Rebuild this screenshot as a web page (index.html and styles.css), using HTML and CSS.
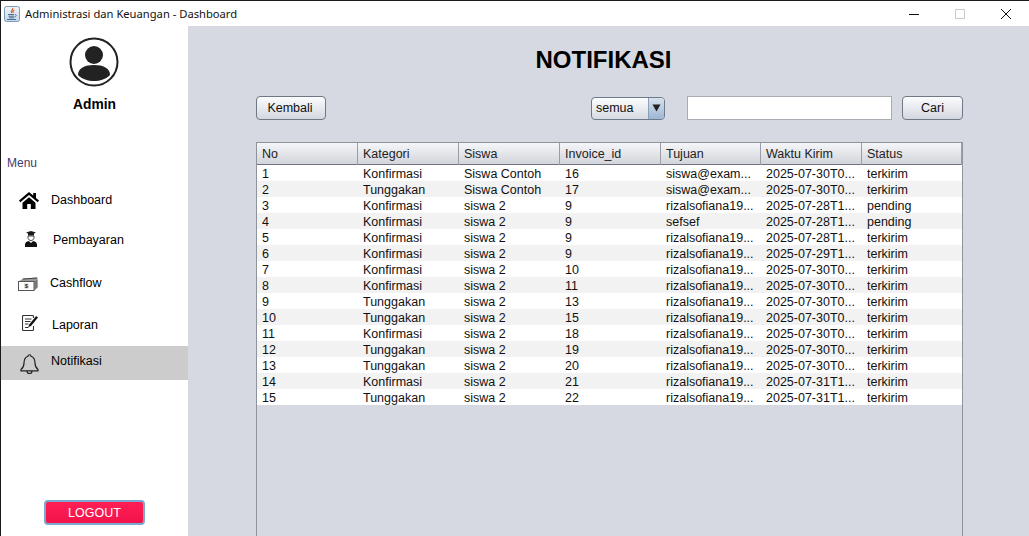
FILE: index.html
```html
<!DOCTYPE html>
<html lang="id">
<head>
<meta charset="utf-8">
<title>Administrasi dan Keuangan - Dashboard</title>
<link rel="stylesheet" href="styles.css">
</head>
<body>
<div class="window">
  <header class="titlebar">
    <svg class="app-icon" viewBox="0 0 16 16" width="16" height="16">
      <defs><linearGradient id="jv" x1="0" y1="0" x2="0" y2="1"><stop offset="0" stop-color="#f2f6fa"/><stop offset="1" stop-color="#c4d5e6"/></linearGradient></defs>
      <rect x="0.500" y="0.500" width="15" height="15" rx="2" fill="url(#jv)" stroke="#7f9db9"/>
      <path d="M8.500 2c1.500 1.700-2.200 2.700-1 5M10.500 4c-2 1-2 2-1.200 3" fill="none" stroke="#d9622b" stroke-width="1.200"/>
      <path d="M4 8.500h6M4.500 10.200h5.500M5 11.800h5M3 13.500h9M11 8.500c2 0 1.500 2-.5 2.500" fill="none" stroke="#4a6f96" stroke-width="1"/>
    </svg>
    <span class="title-text">Administrasi dan Keuangan - Dashboard</span>
    <div class="win-controls">
      <svg class="win-btn" viewBox="0 0 46 26" width="46" height="26"><path d="M18 13.500h10" stroke="#111" fill="none"/></svg>
      <svg class="win-btn" viewBox="0 0 46 26" width="46" height="26"><rect x="18.500" y="8.500" width="9" height="9" stroke="#ccc" fill="none"/></svg>
      <svg class="win-btn" viewBox="0 0 46 26" width="46" height="26"><path d="M18 8l10 10M28 8l-10 10" stroke="#111" fill="none"/></svg>
    </div>
  </header>
  <div class="content">
    <aside class="sidebar">
      <div class="profile">
        <svg class="avatar" viewBox="0 0 50 50" width="50" height="50">
          <circle cx="25" cy="25" r="23.500" fill="#fff" stroke="#222" stroke-width="2"/>
          <circle cx="25" cy="18" r="9" fill="#222"/>
          <path d="M9 38c0-7 7-10 16-10s16 3 16 10c-4 4-10 6-16 6s-12-2-16-6z" fill="#222"/>
        </svg>
        <div class="admin-name">Admin</div>
      </div>
      <div class="menu-label">Menu</div>
      <nav class="nav">
        <div class="nav-item item-dashboard">
          <svg class="nav-icon" viewBox="0 0 20 17" width="20" height="17"><path d="M10 0L0 8.500l1.300 1.700L10 3l8.700 7.200L20 8.500l-3-2.600V1h-2.800v2.500zM3.500 10.700V17h4.700v-5h3.600v5h4.700v-6.300L10 5.200z" fill="#000"/></svg>
          <span>Dashboard</span>
        </div>
        <div class="nav-item item-bayar">
          <svg class="nav-icon" viewBox="0 0 12 16" width="12" height="16"><path d="M1 1.500L6 0l5 1.500-2 1V4.500H3V2.500z" fill="#1a1a1a"/><path d="M3 5h6v1.500C9 8.500 7.500 9.500 6 9.500S3 8.500 3 6.500z" fill="#fff" stroke="#333" stroke-width="0.900"/><path d="M0 16v-2.500C0 11.500 2 10.300 3.800 10L6 12l2.200-2c1.800.3 3.800 1.500 3.800 3.500V16z" fill="#111"/></svg>
          <span>Pembayaran</span>
        </div>
        <div class="nav-item item-cash">
          <svg class="nav-icon" viewBox="0 0 20 14" width="20" height="14"><path d="M0.500 4.500L5 1.500 19.500 0.500V9.500L16 13.500z" fill="#999"/><path d="M5 2l14-1" stroke="#444" fill="none"/><rect x="0.500" y="4.500" width="15.500" height="9" fill="#fff" stroke="#555"/><path d="M16.500 4.500l3-2v8l-3 3z" fill="#777"/><rect x="6" y="6.500" width="5" height="5" fill="#ddd"/><text x="8.500" y="11" class="dollar">$</text></svg>
          <span>Cashflow</span>
        </div>
        <div class="nav-item item-laporan">
          <svg class="nav-icon" viewBox="0 0 16 16" width="16" height="16"><path d="M11.500 11v3.500c0 .5-.4 1-1 1H1.500c-.6 0-1-.5-1-1V1.500c0-.6.4-1 1-1h9c.6 0 1 .4 1 1V3" fill="#fff" stroke="#333" stroke-width="1.100"/><path d="M3 4h6.500M3 6.500h5.500M3 9h3.500M3 12.500h3.500" stroke="#333" stroke-width="1"/><path d="M14.200 1L16 2.600 9 11l-2.700 1.300L7.200 9.500z" fill="#111"/></svg>
          <span>Laporan</span>
        </div>
        <div class="nav-item item-notif">
          <svg class="nav-icon" viewBox="0 0 19 21" width="19" height="21"><path d="M8 3.300C8 1.200 11 1.200 11 3.300 14 4.300 15 7 15 10c0 3.500 1 5 3 6.500v1.300H1v-1.300C3 15 4 13.500 4 10 4 7 5 4.300 8 3.300zM7 18c0 3.500 5 3.500 5 0" fill="none" stroke="#222" stroke-width="1.200"/></svg>
          <span class="notif-label">Notifikasi</span>
        </div>
      </nav>
      <div class="logout-wrap"><button class="logout">LOGOUT</button></div>
    </aside>
    <main class="main">
      <h1 class="page-title">NOTIFIKASI</h1>
      <div class="toolbar">
        <button class="btn btn-back">Kembali</button>
        <div class="combo">
          <span class="combo-value">semua</span>
          <span class="combo-arrow"><svg viewBox="0 0 9 8" width="9" height="8"><path d="M0.500 0.500h8l-4 7z" fill="#222"/></svg></span>
        </div>
        <input class="search" type="text" aria-label="Cari">
        <button class="btn btn-search">Cari</button>
      </div>
      <div class="table-wrap">
        <div class="thead">
          <div class="th">No</div><div class="th">Kategori</div><div class="th">Siswa</div><div class="th">Invoice_id</div><div class="th">Tujuan</div><div class="th">Waktu Kirim</div><div class="th">Status</div>
        </div>
        <div class="tr"><div>1</div><div>Konfirmasi</div><div>Siswa Contoh</div><div>16</div><div>siswa@exam...</div><div>2025-07-30T0...</div><div>terkirim</div></div>
        <div class="tr"><div>2</div><div>Tunggakan</div><div>Siswa Contoh</div><div>17</div><div>siswa@exam...</div><div>2025-07-30T0...</div><div>terkirim</div></div>
        <div class="tr"><div>3</div><div>Konfirmasi</div><div>siswa 2</div><div>9</div><div>rizalsofiana19...</div><div>2025-07-28T1...</div><div>pending</div></div>
        <div class="tr"><div>4</div><div>Konfirmasi</div><div>siswa 2</div><div>9</div><div>sefsef</div><div>2025-07-28T1...</div><div>pending</div></div>
        <div class="tr"><div>5</div><div>Konfirmasi</div><div>siswa 2</div><div>9</div><div>rizalsofiana19...</div><div>2025-07-28T1...</div><div>terkirim</div></div>
        <div class="tr"><div>6</div><div>Konfirmasi</div><div>siswa 2</div><div>9</div><div>rizalsofiana19...</div><div>2025-07-29T1...</div><div>terkirim</div></div>
        <div class="tr"><div>7</div><div>Konfirmasi</div><div>siswa 2</div><div>10</div><div>rizalsofiana19...</div><div>2025-07-30T0...</div><div>terkirim</div></div>
        <div class="tr"><div>8</div><div>Konfirmasi</div><div>siswa 2</div><div>11</div><div>rizalsofiana19...</div><div>2025-07-30T0...</div><div>terkirim</div></div>
        <div class="tr"><div>9</div><div>Tunggakan</div><div>siswa 2</div><div>13</div><div>rizalsofiana19...</div><div>2025-07-30T0...</div><div>terkirim</div></div>
        <div class="tr"><div>10</div><div>Tunggakan</div><div>siswa 2</div><div>15</div><div>rizalsofiana19...</div><div>2025-07-30T0...</div><div>terkirim</div></div>
        <div class="tr"><div>11</div><div>Konfirmasi</div><div>siswa 2</div><div>18</div><div>rizalsofiana19...</div><div>2025-07-30T0...</div><div>terkirim</div></div>
        <div class="tr"><div>12</div><div>Tunggakan</div><div>siswa 2</div><div>19</div><div>rizalsofiana19...</div><div>2025-07-30T0...</div><div>terkirim</div></div>
        <div class="tr"><div>13</div><div>Tunggakan</div><div>siswa 2</div><div>20</div><div>rizalsofiana19...</div><div>2025-07-30T0...</div><div>terkirim</div></div>
        <div class="tr"><div>14</div><div>Konfirmasi</div><div>siswa 2</div><div>21</div><div>rizalsofiana19...</div><div>2025-07-31T1...</div><div>terkirim</div></div>
        <div class="tr"><div>15</div><div>Tunggakan</div><div>siswa 2</div><div>22</div><div>rizalsofiana19...</div><div>2025-07-31T1...</div><div>terkirim</div></div>
      </div>
    </main>
  </div>
</div>
</body>
</html>
```
FILE: styles.css
```css
* { box-sizing: border-box; }
html, body { margin: 0; height: 100%; overflow: hidden; }
body { font-family: "Liberation Sans", Arial, sans-serif; color: #111; background: #fff; }
.window { width: 1029px; height: 536px; display: flex; flex-direction: column; overflow: hidden; border-top: 1px solid #1a1a1a; border-left: 1px solid #1a1a1a; }
.titlebar { height: 25px; flex: none; display: flex; align-items: center; background: #fff; padding-left: 3px; }
.app-icon { flex: none; margin-right: 5px; }
.title-text { font-family: "Noto Sans", "Open Sans", sans-serif; font-size: 11.2px; color: #111; }
.win-controls { margin-left: auto; display: flex; margin-right: 0; }
.win-btn { display: block; }
.content { flex: 1; display: flex; min-height: 0; }
.sidebar { width: 187px; flex: none; background: #fff; display: flex; flex-direction: column; }
.profile { display: flex; flex-direction: column; align-items: center; padding-top: 11px; }
.avatar { display: block; margin-left: -1px; }
.admin-name { font-weight: bold; font-size: 13.8px; color: #000; margin: 10px 0 0 0; line-height: 16px; }
.menu-label { font-size: 12px; color: #3f3a6e; margin: 42px 0 0 6px; line-height: 16px; }
.nav { display: flex; flex-direction: column; margin-top: 12px; }
.nav-item { height: 34px; display: flex; align-items: center; font-size: 12.5px; color: #000; }
.nav-icon { flex: none; display: block; }
.item-dashboard { padding-left: 18px; gap: 12px; }
.item-bayar { margin-top: 6px; padding-left: 24px; gap: 16px; }
.item-bayar .nav-icon { margin-bottom: 2px; }
.item-cash { margin-top: 9px; padding-left: 17px; gap: 12px; }
.item-cash .nav-icon { margin-top: 2px; }
.item-laporan { margin-top: 8px; padding-left: 21px; gap: 14px; }
.item-laporan .nav-icon { margin-bottom: 4px; }
.item-notif { margin-top: 4px; padding-left: 19px; gap: 12px; background: #cccccc; }
.notif-label { margin-bottom: 5px; }
.dollar { font-size: 5px; font-weight: bold; text-anchor: middle; fill: #111; }
.logout-wrap { margin-top: auto; padding: 0 0 11px 43px; }
.logout { display: block; width: 101px; height: 25px; background: linear-gradient(#ff1f55, #f2134b); border: 2px solid #7ba9cf; border-radius: 4px; color: #fff; font: 12.5px "Liberation Sans", Arial, sans-serif; padding: 1px 0 0; }
.main { flex: 1; min-width: 0; background: #d6d9e1; padding: 0 66px 0 68px; display: flex; flex-direction: column; }
.page-title { margin: 20px 12px 0 0; font-size: 24px; line-height: 28px; text-align: center; color: #000; font-weight: bold; }
.toolbar { display: flex; align-items: center; margin-top: 22px; height: 24px; }
.btn { height: 24px; border: 1px solid #6f7884; border-radius: 4px; background: linear-gradient(#fbfcfd, #d3d7df); font: 12.5px "Liberation Sans", Arial, sans-serif; color: #111; padding: 0; }
.btn-back { width: 70px; padding-right: 2px; }
.btn-search { width: 61px; margin-left: 10px; }
.combo { width: 74px; height: 23px; margin-left: 265px; display: flex; border: 1px solid #6c7a8a; border-radius: 4px; background: linear-gradient(#fbfcfd, #d7dbe2); overflow: hidden; font-size: 12.5px; }
.combo-value { flex: 1; line-height: 21px; padding-left: 4px; }
.combo-arrow { width: 16px; display: flex; align-items: center; justify-content: center; border-left: 1px solid #8aa0b8; background: linear-gradient(#d8e2ee, #9db6d2); }
.search { width: 205px; height: 24px; margin-left: 22px; border: 1px solid #a9adb3; background: #fff; padding: 0 4px; outline: none; }
.table-wrap { margin-top: 22px; flex: 1; width: 707px; border: 1px solid #8f939c; border-bottom: 0; font-size: 12.500px; }
.thead, .tr { display: grid; grid-template-columns: 101px 101px 101px 101px 100px 101px 1fr; }
.thead { height: 22px; border-bottom: 1px solid #70747c; background: linear-gradient(#f5f6f8, #d2d5dc); }
.th { line-height: 21px; padding: 1px 0 0 5px; border-right: 1px solid #9a9ea6; color: #222; }
.tr { height: 16px; line-height: 18px; background: #fff; color: #111; }
.tr:nth-child(odd) { background: #f2f2f2; }
.tr > div { padding-left: 5px; white-space: nowrap; overflow: hidden; }
```
